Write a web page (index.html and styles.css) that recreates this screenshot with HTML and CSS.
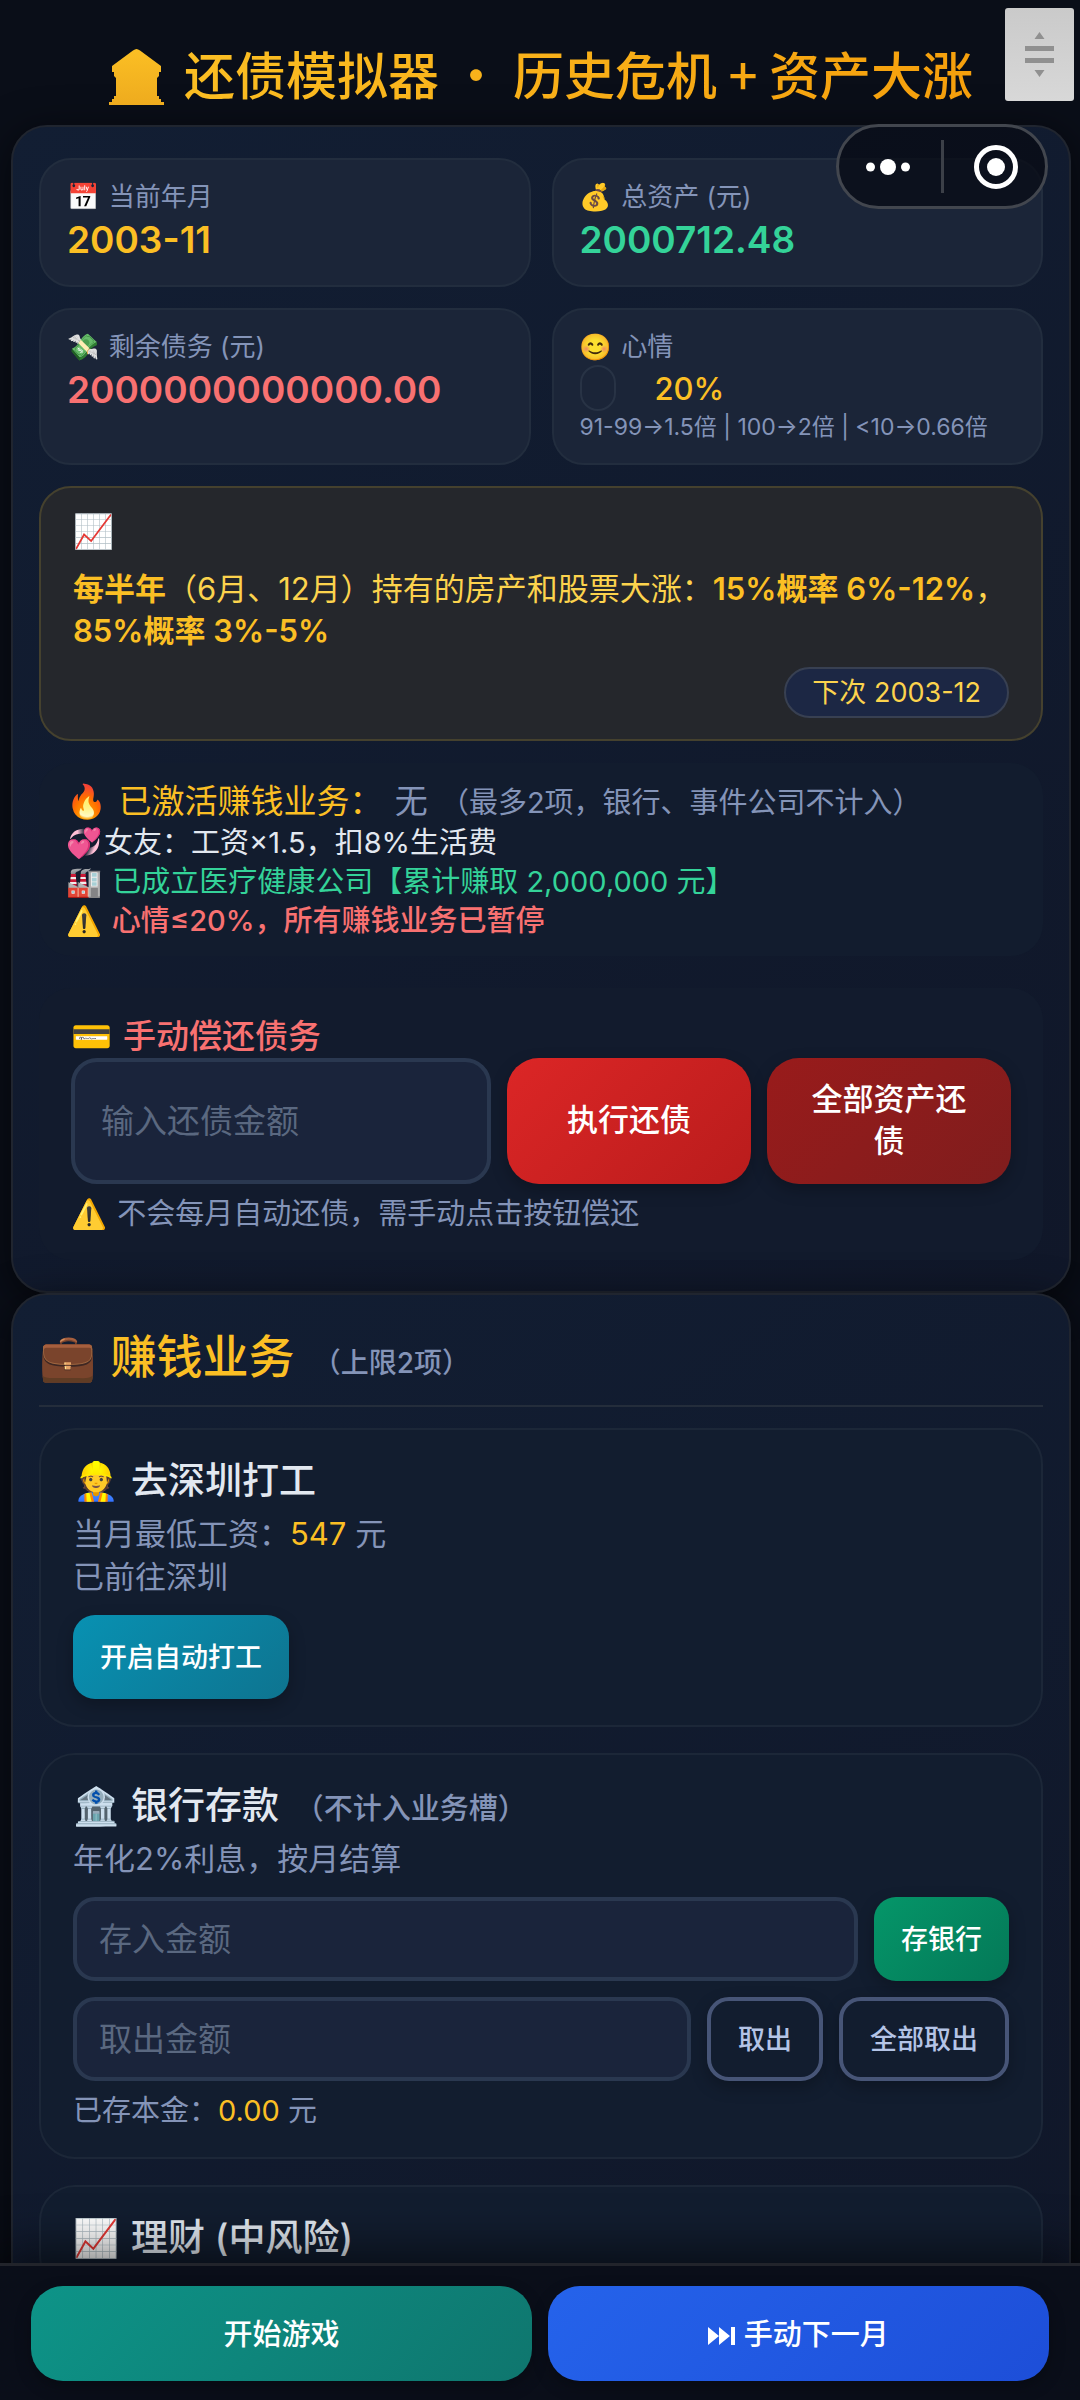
FILE: index.html
```html
<!DOCTYPE html>
<html lang="zh-CN">
<head>
<meta charset="utf-8">
<meta name="viewport" content="width=device-width, initial-scale=1">
<title>还债模拟器 · 历史危机 + 资产大涨</title>
<link rel="stylesheet" href="styles.css">
</head>
<body>
<div class="app">
  <main class="content">
    <header class="hero">
      <svg class="hero-icon" viewBox="0 0 55 56" aria-hidden="true">
        <defs><linearGradient id="gold" x1="0" y1="0" x2="0" y2="1"><stop offset="0" stop-color="#fbbf24"/><stop offset="1" stop-color="#eeab1e"/></linearGradient></defs>
        <path fill="url(#gold)" d="M27.500 0 Q29 0 31 1.500L52 17v6h-2v4l-2 2v18h2v3h2v3h3v3H0v-3h3v-3h2v-3h2V29l-2-2v-4H3v-6L24 1.500Q26 0 27.500 0z"/>
      </svg>
      <h1 class="hero-title">还债模拟器 · 历史危机 + 资产大涨</h1>
    </header>

    <section class="panel">
      <div class="stats">
        <div class="stat">
          <div class="stat-label"><span class="emoji">📅</span> 当前年月</div>
          <div class="stat-value gold">2003-11</div>
        </div>
        <div class="stat">
          <div class="stat-label"><span class="emoji">💰</span> 总资产 (元)</div>
          <div class="stat-value green">2000712.48</div>
        </div>
        <div class="stat">
          <div class="stat-label"><span class="emoji">💸</span> 剩余债务 (元)</div>
          <div class="stat-value red">2000000000000.00</div>
        </div>
        <div class="stat">
          <div class="stat-label"><span class="emoji">😊</span> 心情</div>
          <div class="mood"><span class="mood-bar"></span><span class="mood-value">20%</span></div>
          <div class="stat-hint">91-99→1.5倍 | 100→2倍 | &lt;10→0.66倍</div>
        </div>
      </div>

      <div class="notice">
        <div class="notice-icon"><span class="emoji">📈</span></div>
        <p class="notice-text"><strong>每半年</strong>（6月、12月）持有的房产和股票大涨：<strong>15%概率 6%-12%</strong>，<strong>85%概率 3%-5%</strong></p>
        <span class="badge">下次 2003-12</span>
      </div>

      <div class="status">
        <p class="status-lead"><span class="emoji">🔥</span> <span class="gold">已激活赚钱业务：</span> <span class="muted">无</span> <small class="muted">（最多2项，银行、事件公司不计入）</small></p>
        <p><span class="emoji">💞</span>女友：工资×1.5，扣8%生活费</p>
        <p class="green"><span class="emoji">🏭</span> 已成立医疗健康公司【累计赚取 2,000,000 元】</p>
        <p class="red strong"><span class="emoji">⚠️</span> 心情≤20%，所有赚钱业务已暂停</p>
      </div>

      <div class="repay">
        <label class="repay-title" for="repay-amount"><span class="emoji">💳</span> 手动偿还债务</label>
        <div class="repay-row">
          <input class="field" id="repay-amount" type="text" placeholder="输入还债金额">
          <button class="btn btn-big btn-red" type="button">执行还债</button>
          <button class="btn btn-big btn-darkred" type="button">全部资产还债</button>
        </div>
        <p class="repay-note"><span class="emoji">⚠️</span> 不会每月自动还债，需手动点击按钮偿还</p>
      </div>
    </section>

    <section class="panel">
      <h2 class="section-title"><span class="emoji">💼</span> 赚钱业务 <small>（上限2项）</small></h2>

      <article class="card">
        <h3 class="card-title"><span class="emoji">👷</span> 去深圳打工</h3>
        <p class="card-text">当月最低工资：<span class="gold">547</span> 元<br>已前往深圳</p>
        <div class="row"><button class="btn btn-cyan" type="button">开启自动打工</button></div>
      </article>

      <article class="card">
        <h3 class="card-title"><span class="emoji">🏦</span> 银行存款 <small>（不计入业务槽）</small></h3>
        <p class="card-text">年化2%利息，按月结算</p>
        <div class="row">
          <input class="field" type="text" placeholder="存入金额" aria-label="存入金额">
          <button class="btn btn-green" type="button">存银行</button>
        </div>
        <div class="row">
          <input class="field" type="text" placeholder="取出金额" aria-label="取出金额">
          <button class="btn btn-outline" type="button">取出</button>
          <button class="btn btn-outline" type="button">全部取出</button>
        </div>
        <p class="card-foot">已存本金：<span class="gold">0.00</span> 元</p>
      </article>

      <article class="card">
        <h3 class="card-title"><span class="emoji">📈</span> 理财 (中风险)</h3>
      </article>
    </section>
  </main>

  <footer class="actions">
    <button class="btn btn-action btn-teal" type="button">开始游戏</button>
    <button class="btn btn-action btn-blue" type="button">
      <svg class="skip-icon" viewBox="0 0 28 18" aria-hidden="true"><path fill="#fff" d="M0 0l11 9L0 18zM11 0l11 9-11 9zM23 0h4v18h-4z"/></svg>
      手动下一月
    </button>
  </footer>

  <div class="drag-handle">
    <svg viewBox="0 0 69 93" aria-hidden="true"><path fill="#909090" d="M34.500 24l5 7h-10zM20 38h29v5H20zM20 50h29v5H20zM29.500 62h10l-5 7z"/></svg>
  </div>

  <div class="capsule">
    <button class="capsule-btn" type="button" aria-label="更多">
      <svg viewBox="0 0 44 44" aria-hidden="true"><circle cx="4.500" cy="22" r="4.500" fill="#fff"/><circle cx="22" cy="22" r="8" fill="#fff"/><circle cx="39.500" cy="22" r="4.500" fill="#fff"/></svg>
    </button>
    <span class="capsule-line"></span>
    <button class="capsule-btn" type="button" aria-label="关闭">
      <svg viewBox="0 0 44 44" aria-hidden="true"><circle cx="22" cy="22" r="19.500" fill="none" stroke="#fff" stroke-width="5"/><circle cx="22" cy="22" r="9" fill="#fff"/></svg>
    </button>
  </div>
</div>
</body>
</html>
```
FILE: styles.css
```css
* { box-sizing: border-box; }

body, h1, h2, h3, p { margin: 0; }

body {
  background: #0a0e18;
  color: #e2e8f0;
  font-family: Inter, "Noto Sans CJK SC", "Noto Color Emoji", sans-serif;
  font-size: 29px;
}

button, input { font: inherit; }

small { line-height: 1; }

.app {
  position: relative;
  display: flex;
  flex-direction: column;
  height: 100vh;
  overflow: hidden;
}

.content {
  flex: 1;
  min-height: 0;
  overflow: hidden;
  padding: 0 9px 0 11px;
}

.gold { color: #fbbf24; }
.green { color: #34d399; }
.red { color: #f87171; }
.muted { color: #8494b8; }
.strong { font-weight: 500; }
.emoji { margin-right: 2px; }

/* Header */
.hero {
  display: flex;
  align-items: flex-start;
  justify-content: center;
  gap: 20px;
  height: 125px;
  padding-top: 49px;
}

.hero-icon { width: 55px; height: 56px; }

.hero-title {
  background: linear-gradient(135deg, #fbbf24, #f59e0b);
  background-clip: text;
  color: transparent;
  font-family: "Noto Sans CJK SC", sans-serif;
  font-size: 51px;
  font-weight: 500;
  line-height: 48px;
  padding-bottom: 6px;
  white-space: nowrap;
}

/* Panels */
.panel {
  padding: 31px 26px;
  border: 2px solid #20252f;
  border-radius: 36px;
  background: linear-gradient(145deg, #121e33, #101729);
  box-shadow: 0 8px 40px rgba(0, 0, 0, 0.6);
}

.stats {
  display: grid;
  grid-template-columns: 1fr 1fr;
  gap: 21px;
}

.stat {
  padding: 20px 26px;
  border: 2px solid #222d3e;
  border-radius: 32px;
  background: #1b2538;
}

.stat-label {
  color: #8494b8;
  font-size: 26px;
  line-height: 34px;
}

.stat-value {
  font-size: 37px;
  font-weight: 600;
  line-height: 51px;
}

.mood {
  display: flex;
  align-items: center;
  gap: 39px;
  height: 48px;
}

.mood-bar {
  width: 36px;
  height: 46px;
  border: 2px solid #283345;
  border-radius: 18px;
}

.mood-value {
  color: #fbbf24;
  font-size: 31px;
  font-weight: 500;
}

.stat-hint {
  color: #8494b8;
  font-size: 23px;
  line-height: 31px;
  white-space: nowrap;
}

.notice {
  display: flex;
  flex-direction: column;
  gap: 15px;
  margin-top: 21px;
  padding: 21px 32px;
  border: 2px solid #45412e;
  border-radius: 32px;
  background: #25272c;
  color: #fcd34d;
}

.notice-icon { font-size: 33px; line-height: 44px; }

.notice-text { font-size: 31px; line-height: 42px; }

.notice-text strong { color: #fbbf24; font-weight: 600; }

.badge {
  align-self: flex-end;
  padding: 0 26px;
  border: 2px solid #384052;
  border-radius: 26px;
  background: #1c2744;
  font-size: 27px;
  line-height: 47px;
}

.status {
  margin-top: 22px;
  padding: 16px 27px;
  border-radius: 32px;
  background: #121c2e;
  line-height: 39px;
}

.status-lead { font-size: 33px; line-height: 44px; }
.status-lead .muted { margin-left: 3px; }
.status-lead small { font-size: 29px; }

.repay {
  margin-top: 32px;
  padding: 26px 32px;
  border-radius: 32px;
  background: #121b2d;
}

.repay-title {
  display: block;
  color: #f87171;
  font-size: 33px;
  font-weight: 500;
  line-height: 44px;
}

.repay-row { display: flex; gap: 16px; }

.repay-note {
  margin-top: 10px;
  color: #8494b8;
  line-height: 40px;
}

/* Controls */
.field {
  flex: 1;
  min-width: 0;
  padding: 0 22px;
  border: 4px solid #2a3850;
  border-radius: 22px;
  background: #1a243b;
  color: #e2e8f0;
  font-size: 33px;
}

.field::placeholder { color: #5a6880; opacity: 1; }

.repay .field { padding: 0 26px; border-radius: 26px; }

.btn {
  height: 84px;
  padding: 0 27px 3px;
  border: 0;
  border-radius: 22px;
  color: #fff;
  font-size: 27px;
  font-weight: 500;
  box-shadow: 0 6px 16px rgba(0, 0, 0, 0.25);
}

.btn-big {
  width: 244px;
  height: 126px;
  padding: 0 32px 3px;
  border-radius: 32px;
  font-size: 31px;
  line-height: 42px;
}

.btn-red { background: linear-gradient(135deg, #dc2626, #b91c1c); }
.btn-darkred { background: linear-gradient(135deg, #991b1b, #7f1d1d); }
.btn-cyan { background: linear-gradient(135deg, #0891b2, #0e7490); }
.btn-green { background: linear-gradient(135deg, #059669, #047857); }
.btn-teal { background: linear-gradient(135deg, #0d9488, #0f766e); }
.btn-blue { background: linear-gradient(135deg, #2563eb, #1d4ed8); }

.btn-outline {
  border: 4px solid #475577;
  background: transparent;
  color: #b4c4e6;
}

/* Businesses */
.section-title {
  height: 81px;
  margin-bottom: 21px;
  border-bottom: 2px solid #242d3b;
  color: #fbbf24;
  font-size: 46px;
  font-weight: 500;
  line-height: 60px;
}

.section-title small {
  margin-left: 6px;
  color: #8494b8;
  font-size: 28px;
}

.card {
  padding: 26px 32px;
  border: 2px solid #1c2738;
  border-radius: 36px;
  background: #121d2f;
}

.card + .card { margin-top: 26px; }

.card-title {
  font-size: 37px;
  font-weight: 500;
  line-height: 50px;
}

.card-title small {
  margin-left: 6px;
  color: #8494b8;
  font-size: 29px;
}

.card-text {
  margin: 6px 0 17px;
  color: #8494b8;
  font-size: 31px;
  line-height: 43px;
}

.row { display: flex; gap: 16px; }
.row + .row { margin-top: 16px; }

.card-foot {
  margin-top: 10px;
  color: #8494b8;
  line-height: 40px;
}

/* Bottom bar */
.actions {
  position: relative;
  display: grid;
  grid-template-columns: 1fr 1fr;
  gap: 16px;
  padding: 20px 31px 19px;
  border-top: 3px solid #22242b;
  background: #0a0e19;
  box-shadow: 0 -10px 50px rgba(0, 0, 0, 0.6);
}

.btn-action {
  height: 95px;
  border-radius: 32px;
  font-size: 29px;
}

.skip-icon { width: 28px; height: 18px; }

/* Floating controls */
.drag-handle {
  position: absolute;
  top: 8px;
  right: 6px;
  width: 69px;
  height: 93px;
  border-radius: 3px;
  background: linear-gradient(#cacaca, #d8d8d8);
}

.capsule {
  position: absolute;
  top: 124px;
  right: 32px;
  display: flex;
  align-items: center;
  justify-content: space-between;
  width: 212px;
  height: 85px;
  padding: 0 27px;
  border: 3px solid #42464e;
  border-radius: 43px;
  background: rgba(8, 11, 20, 0.75);
}

.capsule-btn {
  width: 44px;
  height: 44px;
  padding: 0;
  border: 0;
  background: none;
}

.capsule-btn svg { display: block; }

.capsule-line { width: 3px; height: 53px; background: #3c4048; }
```
